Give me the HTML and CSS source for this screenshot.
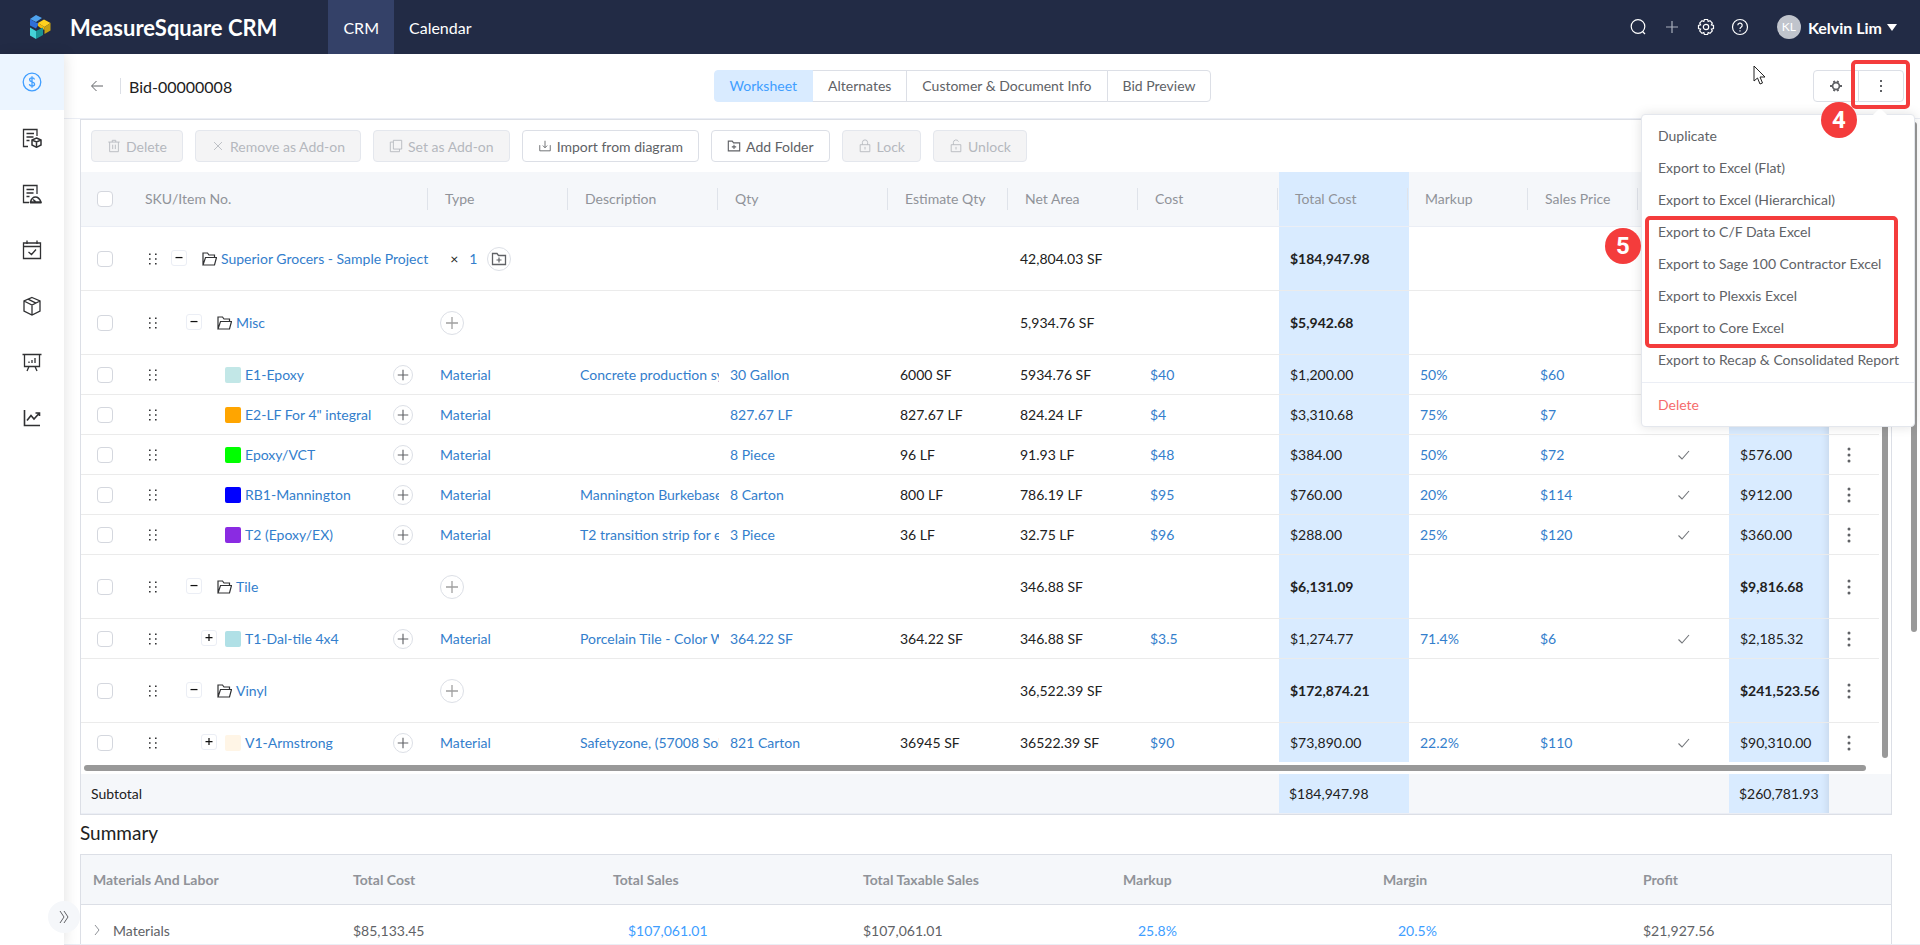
FILE: index.html
```html
<!DOCTYPE html>
<html lang="en">
<head>
    <meta charset="UTF-8">
    <meta name="viewport" content="width=device-width, initial-scale=1.0">
    <title>MeasureSquare CRM - Bid-00000008</title>
    <link rel="stylesheet" href="styles.css">
</head>
<body>
    <!-- shared icons -->
    <svg class="sprite" aria-hidden="true">
        <symbol id="i-drag" viewBox="0 0 10 14"><path d="M1 1.500h1.600v1.600H1zM7 1.500h1.600v1.600H7zM1 6.200h1.600v1.600H1zM7 6.200h1.600v1.600H7zM1 11h1.600v1.600H1zM7 11h1.600v1.600H7z" fill="currentColor"/></symbol>
        <symbol id="i-folder" viewBox="0 0 15 14"><path d="M1 13V1h4.500l1.500 2h5.500v2.500M1 13l2.500-7.500h11L12.500 13z" fill="none" stroke="currentColor" stroke-width="1.200"/></symbol>
        <symbol id="i-plus" viewBox="0 0 16 16"><path d="M8 2v12M2 8h12" fill="none" stroke="currentColor" stroke-width="1.300"/></symbol>
        <symbol id="i-folder-add" viewBox="0 0 16 16"><path d="M1.500 2.500h4.500l1.500 2h7v9h-13z" fill="none" stroke="currentColor" stroke-width="1.300"/><path d="M8 6.500v5M5.500 9h5" fill="none" stroke="currentColor" stroke-width="1.200"/></symbol>
        <symbol id="i-check" viewBox="0 0 14 14"><path d="M1.500 7.500l3.500 3.500 7-8" fill="none" stroke="currentColor" stroke-width="1.100"/></symbol>
        <symbol id="i-more" viewBox="0 0 4 16"><circle cx="2" cy="2" r="1.500"/><circle cx="2" cy="8" r="1.500"/><circle cx="2" cy="14" r="1.500"/></symbol>
        <symbol id="i-lock" viewBox="0 0 16 16"><path d="M2.500 6.500h11v8h-11zM5 6.500V4a3 3 0 0 1 6 0v2.500M8 9v3" fill="none" stroke="currentColor"/></symbol>
        <symbol id="i-unlock" viewBox="0 0 16 16"><path d="M2.500 6.500h11v8h-11zM5 6.500V4a3 3 0 0 1 5.800-1M8 9v3" fill="none" stroke="currentColor"/></symbol>
    </svg>

    <header class="topbar">
        <svg class="logo" viewBox="0 0 22 24">
            <path d="M1 4l6-4 6 3-6 4z" fill="#4fa3ee"/>
            <path d="M1 4l6 3.500 3 1-3 5-6-3z" fill="#2f6fd8"/>
            <path d="M9 8l6-3.500 6.500 3.500-6 4z" fill="#ffd21f"/>
            <path d="M21.500 8v7.500L15.500 19v-7z" fill="#c9a312"/>
            <path d="M9 8l6.500 4v3L11 12.500 9 11z" fill="#f5bf0c"/>
            <path d="M1 12.500l6 3.500v8l-6-3.500z" fill="#45d3d8"/>
            <path d="M7 16l7-3.500V20l-7 4z" fill="#1a9496"/>
        </svg>
        <h1 class="brand">MeasureSquare CRM</h1>
        <nav class="topnav">
            <a class="active" href="#">CRM</a>
            <a href="#">Calendar</a>
        </nav>
        <div class="tools">
            <button class="tool" aria-label="Search"><svg viewBox="0 0 18 18"><circle cx="9" cy="8.500" r="6.800"/><path d="M13.500 13.500l2.500 2.500"/></svg></button>
            <button class="tool dim" aria-label="Add"><svg viewBox="0 0 18 18"><path d="M9 3v12M3 9h12"/></svg></button>
            <button class="tool" aria-label="Settings"><svg viewBox="0 0 18 18"><path d="M7.400 1.500h3.200l.6 2 1.800-.8 2.300 2.300-.9 1.800 2.100.6v3.200l-2.100.6.9 1.800-2.300 2.300-1.800-.8-.6 2H7.400l-.6-2-1.800.8L2.700 13l.9-1.800-2.100-.6V7.400l2.100-.6L2.700 5 5 2.700l1.800.8z"/><circle cx="9" cy="9" r="2.700"/></svg></button>
            <button class="tool" aria-label="Help"><svg viewBox="0 0 18 18"><circle cx="9" cy="9" r="7.500"/><path d="M6.800 7.300a2.200 2.200 0 1 1 3.300 1.900c-.8.500-1.100.8-1.100 1.800M9 12.300v1.300"/></svg></button>
        </div>
        <button class="user"><span class="avatar">KL</span>Kelvin Lim<span class="caret"></span></button>
    </header>

    <div class="shell">
        <nav class="sidebar">
            <a class="active" href="#" aria-label="Bids"><svg viewBox="0 0 20 20"><circle cx="10" cy="10" r="8.800"/><path d="M12.500 7.500c-.2-1.200-1.200-1.700-2.500-1.700s-2.400.7-2.400 2c0 2.800 5 1.500 5 4.300 0 1.300-1.100 2-2.500 2s-2.500-.6-2.700-1.900M10 4.300v11.400"/></svg></a>
            <a href="#" aria-label="Orders"><svg viewBox="0 0 20 20"><path d="M6 18.500H1.500v-17H15V8M4.500 5.500H12M4.500 9h7M4.500 12.500h3"/><path d="M14.500 10l4.500 2v5l-4.500 2.300L10 17v-5zM10 12l4.500 2 4.500-2M14.500 14v5" stroke-width="1.500"/></svg></a>
            <a href="#" aria-label="Invoices"><svg viewBox="0 0 20 20"><path d="M7 18.500H1.500v-17H15V10M4.500 5.500H12M4.500 9h7M4.500 12.500h3"/><path d="M8.500 18c1-3.500 3-5 5-5s4 1.500 5.500 5zM11 15.500l2.500 2M8 18.800h11.500" stroke-width="1.500"/></svg></a>
            <a href="#" aria-label="Schedule"><svg viewBox="0 0 20 20"><path d="M1.500 3h17v15.500h-17zM1.500 6.500h17M5 .5V4M15 .5V4M6.500 12l3 2.500 4.500-5"/></svg></a>
            <a href="#" aria-label="Products"><svg viewBox="0 0 20 20"><path d="M10 1.500l8 3.500v10l-8 4-8-4V5zM2 5l8 4 8-4M10 9v10M6 3.200l8 4"/></svg></a>
            <a href="#" aria-label="Presentations"><svg viewBox="0 0 20 20"><path d="M.5 2.500h19M2.500 2.500v12h15v-12M7 14.500L5 19M13 14.500l2 4.500M7 11V9.500M10 11V8M13 11V6"/></svg></a>
            <a href="#" aria-label="Reports"><svg viewBox="0 0 20 20"><path d="M2.500 2v15.500H18M5 12.500l4-5 3 3.500L17 5.500M13.500 5H17.500v3" stroke-width="1.600"/></svg></a>
        </nav>
        <button class="expand" aria-label="Expand menu"><svg viewBox="0 0 12 12"><path d="M2 0l4 6-4 6M6 0l4 6-4 6"/></svg></button>

        <main class="main">
            <div class="pagehead">
                <div class="crumb">
                    <a class="back" href="#" aria-label="Back"><svg viewBox="0 0 14 12"><path d="M13 6H2M6.500 1l-5 5 5 5"/></svg></a>
                    <h2>Bid-00000008</h2>
                </div>
                <div class="tabs">
                    <button class="active">Worksheet</button>
                    <button>Alternates</button>
                    <button>Customer &amp; Document Info</button>
                    <button>Bid Preview</button>
                </div>
                <div class="actions">
                    <button aria-label="Columns"><svg viewBox="0 0 14 14"><circle cx="7" cy="7" r="4" stroke-width="2"/><path d="M4.500 1l1 2.500M9.500 1l-1 2.500M4.500 13l1-2.500M9.500 13l-1-2.500M0 7h3M11 7h3" stroke-width="2.400"/></svg></button>
                    <div class="dropdown">
                        <button aria-label="More"><svg class="dots" viewBox="0 0 4 14"><path d="M1 1h2v2H1zM1 6h2v2H1zM1 11h2v2H1z" fill="currentColor" stroke="none"/></svg></button>
                        <span class="frame frame-button"></span>
                        <div class="menu">
                            <button>Duplicate</button>
                            <button>Export to Excel (Flat)</button>
                            <button>Export to Excel (Hierarchical)</button>
                            <div class="group">
                                <button>Export to C/F Data Excel</button>
                                <button>Export to Sage 100 Contractor Excel</button>
                                <button>Export to Plexxis Excel</button>
                                <button>Export to Core Excel</button>
                                <span class="frame frame-group"></span>
                                <span class="step step-5">5</span>
                            </div>
                            <button>Export to Recap &amp; Consolidated Report</button>
                            <hr>
                            <button class="danger">Delete</button>
                            <span class="step step-4">4</span>
                        </div>
                    </div>
                </div>
            </div>

            <div class="content">
                <section class="worksheet">
                    <div class="toolbar">
                        <button disabled><svg viewBox="0 0 16 16"><path d="M1.500 3.500h13M3 3.500v11h10v-11M6 3.500v-2h4v2M6.500 6.500v5M9.500 6.500v5"/></svg>Delete</button>
                        <button disabled><svg viewBox="0 0 16 16"><path d="M3.500 3.500l9 9M12.500 3.500l-9 9"/></svg>Remove as Add-on</button>
                        <button disabled><svg viewBox="0 0 16 16"><path d="M5 1.500h9.500v10H5zM5 3.500H1.500v11H12v-3"/></svg>Set as Add-on</button>
                        <button><svg viewBox="0 0 16 16"><path d="M2 7v6.500h12V7M8 2v8M5.500 7.500L8 10l2.500-2.500"/></svg>Import from diagram</button>
                        <button><svg><use href="#i-folder-add"/></svg>Add Folder</button>
                        <button disabled><svg><use href="#i-lock"/></svg>Lock</button>
                        <button disabled><svg><use href="#i-unlock"/></svg>Unlock</button>
                    </div>

                    <div class="grid-wrap">
                        <table class="grid">
                            <colgroup><col class="w48"><col><col class="w140"><col class="w150"><col class="w170"><col class="w120"><col class="w130"><col class="w140"><col class="w130"><col class="w120"><col class="w110"><col class="w90"><col class="w100"><col class="w50"></colgroup>
                            <thead>
                                <tr>
                                    <th class="nosep"><input type="checkbox" aria-label="Select all"></th>
                                    <th>SKU/Item No.</th>
                                    <th>Type</th>
                                    <th>Description</th>
                                    <th>Qty</th>
                                    <th>Estimate Qty</th>
                                    <th>Net Area</th>
                                    <th>Cost</th>
                                    <th class="hl">Total Cost</th>
                                    <th>Markup</th>
                                    <th>Sales Price</th>
                                    <th></th>
                                    <th class="hl"></th>
                                    <th class="nosep"></th>
                                </tr>
                            </thead>
                            <tbody>
                                <tr class="folder">
                                    <td><input type="checkbox" aria-label="Select row"></td>
                                    <td colspan="2"><div class="item"><svg class="drag"><use href="#i-drag"/></svg><button class="toggle" aria-label="Collapse"><svg viewBox="0 0 16 16"><path d="M4 7.500h8"/></svg></button><svg class="fold"><use href="#i-folder"/></svg><a href="#">Superior Grocers - Sample Project</a><span class="times">×</span><a href="#">1</a><button class="round big" aria-label="Add folder"><svg><use href="#i-folder-add"/></svg></button></div></td>
                                    <td></td><td></td><td></td>
                                    <td>42,804.03 SF</td>
                                    <td></td>
                                    <td class="hl">$184,947.98</td>
                                    <td></td><td></td><td></td>
                                    <td class="hl edge"></td>
                                    <td></td>
                                </tr>
                                <tr class="folder">
                                    <td><input type="checkbox" aria-label="Select row"></td>
                                    <td><div class="item level-1"><svg class="drag"><use href="#i-drag"/></svg><button class="toggle" aria-label="Collapse"><svg viewBox="0 0 16 16"><path d="M4 7.500h8"/></svg></button><svg class="fold"><use href="#i-folder"/></svg><a href="#">Misc</a></div></td>
                                    <td><button class="round big" aria-label="Add item"><svg><use href="#i-plus"/></svg></button></td>
                                    <td></td><td></td><td></td>
                                    <td>5,934.76 SF</td>
                                    <td></td>
                                    <td class="hl">$5,942.68</td>
                                    <td></td><td></td><td></td>
                                    <td class="hl edge"></td>
                                    <td></td>
                                </tr>
                                <tr>
                                    <td><input type="checkbox" aria-label="Select row"></td>
                                    <td><div class="item level-2"><svg class="drag"><use href="#i-drag"/></svg><span class="toggle none"></span><i class="swatch aqua"></i><a href="#">E1-Epoxy</a><button class="round" aria-label="Add"><svg><use href="#i-plus"/></svg></button></div></td>
                                    <td><a href="#">Material</a></td>
                                    <td><a href="#">Concrete production system</a></td>
                                    <td><a href="#">30 Gallon</a></td>
                                    <td>6000 SF</td>
                                    <td>5934.76 SF</td>
                                    <td><a href="#">$40</a></td>
                                    <td class="hl">$1,200.00</td>
                                    <td><a href="#">50%</a></td>
                                    <td><a href="#">$60</a></td>
                                    <td></td>
                                    <td class="hl edge"></td>
                                    <td></td>
                                </tr>
                                <tr>
                                    <td><input type="checkbox" aria-label="Select row"></td>
                                    <td><div class="item level-2"><svg class="drag"><use href="#i-drag"/></svg><span class="toggle none"></span><i class="swatch orange"></i><a href="#">E2-LF For 4" integral</a><button class="round" aria-label="Add"><svg><use href="#i-plus"/></svg></button></div></td>
                                    <td><a href="#">Material</a></td>
                                    <td></td>
                                    <td><a href="#">827.67 LF</a></td>
                                    <td>827.67 LF</td>
                                    <td>824.24 LF</td>
                                    <td><a href="#">$4</a></td>
                                    <td class="hl">$3,310.68</td>
                                    <td><a href="#">75%</a></td>
                                    <td><a href="#">$7</a></td>
                                    <td></td>
                                    <td class="hl edge"></td>
                                    <td></td>
                                </tr>
                                <tr>
                                    <td><input type="checkbox" aria-label="Select row"></td>
                                    <td><div class="item level-2"><svg class="drag"><use href="#i-drag"/></svg><span class="toggle none"></span><i class="swatch lime"></i><a href="#">Epoxy/VCT</a><button class="round" aria-label="Add"><svg><use href="#i-plus"/></svg></button></div></td>
                                    <td><a href="#">Material</a></td>
                                    <td></td>
                                    <td><a href="#">8 Piece</a></td>
                                    <td>96 LF</td>
                                    <td>91.93 LF</td>
                                    <td><a href="#">$48</a></td>
                                    <td class="hl">$384.00</td>
                                    <td><a href="#">50%</a></td>
                                    <td><a href="#">$72</a></td>
                                    <td class="tick"><svg><use href="#i-check"/></svg></td>
                                    <td class="hl edge">$576.00</td>
                                    <td><svg class="more"><use href="#i-more"/></svg></td>
                                </tr>
                                <tr>
                                    <td><input type="checkbox" aria-label="Select row"></td>
                                    <td><div class="item level-2"><svg class="drag"><use href="#i-drag"/></svg><span class="toggle none"></span><i class="swatch blue"></i><a href="#">RB1-Mannington</a><button class="round" aria-label="Add"><svg><use href="#i-plus"/></svg></button></div></td>
                                    <td><a href="#">Material</a></td>
                                    <td><a href="#">Mannington Burkebase</a></td>
                                    <td><a href="#">8 Carton</a></td>
                                    <td>800 LF</td>
                                    <td>786.19 LF</td>
                                    <td><a href="#">$95</a></td>
                                    <td class="hl">$760.00</td>
                                    <td><a href="#">20%</a></td>
                                    <td><a href="#">$114</a></td>
                                    <td class="tick"><svg><use href="#i-check"/></svg></td>
                                    <td class="hl edge">$912.00</td>
                                    <td><svg class="more"><use href="#i-more"/></svg></td>
                                </tr>
                                <tr>
                                    <td><input type="checkbox" aria-label="Select row"></td>
                                    <td><div class="item level-2"><svg class="drag"><use href="#i-drag"/></svg><span class="toggle none"></span><i class="swatch violet"></i><a href="#">T2 (Epoxy/EX)</a><button class="round" aria-label="Add"><svg><use href="#i-plus"/></svg></button></div></td>
                                    <td><a href="#">Material</a></td>
                                    <td><a href="#">T2 transition strip for epoxy</a></td>
                                    <td><a href="#">3 Piece</a></td>
                                    <td>36 LF</td>
                                    <td>32.75 LF</td>
                                    <td><a href="#">$96</a></td>
                                    <td class="hl">$288.00</td>
                                    <td><a href="#">25%</a></td>
                                    <td><a href="#">$120</a></td>
                                    <td class="tick"><svg><use href="#i-check"/></svg></td>
                                    <td class="hl edge">$360.00</td>
                                    <td><svg class="more"><use href="#i-more"/></svg></td>
                                </tr>
                                <tr class="folder">
                                    <td><input type="checkbox" aria-label="Select row"></td>
                                    <td><div class="item level-1"><svg class="drag"><use href="#i-drag"/></svg><button class="toggle" aria-label="Collapse"><svg viewBox="0 0 16 16"><path d="M4 7.500h8"/></svg></button><svg class="fold"><use href="#i-folder"/></svg><a href="#">Tile</a></div></td>
                                    <td><button class="round big" aria-label="Add item"><svg><use href="#i-plus"/></svg></button></td>
                                    <td></td><td></td><td></td>
                                    <td>346.88 SF</td>
                                    <td></td>
                                    <td class="hl">$6,131.09</td>
                                    <td></td><td></td><td></td>
                                    <td class="hl edge">$9,816.68</td>
                                    <td><svg class="more"><use href="#i-more"/></svg></td>
                                </tr>
                                <tr>
                                    <td><input type="checkbox" aria-label="Select row"></td>
                                    <td><div class="item level-2"><svg class="drag"><use href="#i-drag"/></svg><button class="toggle" aria-label="Expand"><svg viewBox="0 0 16 16"><path d="M4 7.500h8M8 3.500v8"/></svg></button><i class="swatch powder"></i><a href="#">T1-Dal-tile 4x4</a><button class="round" aria-label="Add"><svg><use href="#i-plus"/></svg></button></div></td>
                                    <td><a href="#">Material</a></td>
                                    <td><a href="#">Porcelain Tile - Color White</a></td>
                                    <td><a href="#">364.22 SF</a></td>
                                    <td>364.22 SF</td>
                                    <td>346.88 SF</td>
                                    <td><a href="#">$3.5</a></td>
                                    <td class="hl">$1,274.77</td>
                                    <td><a href="#">71.4%</a></td>
                                    <td><a href="#">$6</a></td>
                                    <td class="tick"><svg><use href="#i-check"/></svg></td>
                                    <td class="hl edge">$2,185.32</td>
                                    <td><svg class="more"><use href="#i-more"/></svg></td>
                                </tr>
                                <tr class="folder">
                                    <td><input type="checkbox" aria-label="Select row"></td>
                                    <td><div class="item level-1"><svg class="drag"><use href="#i-drag"/></svg><button class="toggle" aria-label="Collapse"><svg viewBox="0 0 16 16"><path d="M4 7.500h8"/></svg></button><svg class="fold"><use href="#i-folder"/></svg><a href="#">Vinyl</a></div></td>
                                    <td><button class="round big" aria-label="Add item"><svg><use href="#i-plus"/></svg></button></td>
                                    <td></td><td></td><td></td>
                                    <td>36,522.39 SF</td>
                                    <td></td>
                                    <td class="hl">$172,874.21</td>
                                    <td></td><td></td><td></td>
                                    <td class="hl edge">$241,523.56</td>
                                    <td><svg class="more"><use href="#i-more"/></svg></td>
                                </tr>
                                <tr>
                                    <td><input type="checkbox" aria-label="Select row"></td>
                                    <td><div class="item level-2"><svg class="drag"><use href="#i-drag"/></svg><button class="toggle" aria-label="Expand"><svg viewBox="0 0 16 16"><path d="M4 7.500h8M8 3.500v8"/></svg></button><i class="swatch cream"></i><a href="#">V1-Armstrong</a><button class="round" aria-label="Add"><svg><use href="#i-plus"/></svg></button></div></td>
                                    <td><a href="#">Material</a></td>
                                    <td><a href="#">Safetyzone, (57008 Solid)</a></td>
                                    <td><a href="#">821 Carton</a></td>
                                    <td>36945 SF</td>
                                    <td>36522.39 SF</td>
                                    <td><a href="#">$90</a></td>
                                    <td class="hl">$73,890.00</td>
                                    <td><a href="#">22.2%</a></td>
                                    <td><a href="#">$110</a></td>
                                    <td class="tick"><svg><use href="#i-check"/></svg></td>
                                    <td class="hl edge">$90,310.00</td>
                                    <td><svg class="more"><use href="#i-more"/></svg></td>
                                </tr>
                            </tbody>
                        </table>
                        <div class="vbar"></div>
                    </div>
                    <div class="hbar"></div>
                    <div class="subtotal">
                        <table class="grid">
                            <colgroup><col class="w48"><col><col class="w140"><col class="w150"><col class="w170"><col class="w120"><col class="w130"><col class="w140"><col class="w130"><col class="w120"><col class="w110"><col class="w90"><col class="w100"><col class="w50"></colgroup>
                            <tbody>
                                <tr>
                                    <td class="label" colspan="2">Subtotal</td>
                                    <td></td><td></td><td></td><td></td><td></td><td></td>
                                    <td class="hl">$184,947.98</td>
                                    <td></td><td></td><td></td>
                                    <td class="hl edge">$260,781.93</td>
                                    <td></td>
                                </tr>
                            </tbody>
                        </table>
                    </div>
                </section>

                <h3>Summary</h3>
                <table class="summary">
                    <colgroup><col><col><col class="w250"><col><col><col><col></colgroup>
                    <thead>
                        <tr>
                            <th>Materials And Labor</th>
                            <th>Total Cost</th>
                            <th>Total Sales</th>
                            <th>Total Taxable Sales</th>
                            <th>Markup</th>
                            <th>Margin</th>
                            <th>Profit</th>
                        </tr>
                    </thead>
                    <tbody>
                        <tr>
                            <td><svg class="chev" viewBox="0 0 8 12"><path d="M2 1l4 5-4 5"/></svg>Materials</td>
                            <td>$85,133.45</td>
                            <td><a href="#">$107,061.01</a></td>
                            <td>$107,061.01</td>
                            <td><a href="#">25.8%</a></td>
                            <td><a href="#">20.5%</a></td>
                            <td>$21,927.56</td>
                        </tr>
                    </tbody>
                </table>
            </div>
            <div class="page-bar"></div>
        </main>
    </div>

    <svg class="pointer" viewBox="0 0 13 20"><path d="M1 1v15l3.500-3 2.500 6 2.500-1-2.500-6h5z" fill="#fff" stroke="#222"/></svg>
</body>
</html>
```
FILE: styles.css
```css
* {
    box-sizing: border-box;
}
body {
    margin: 0;
    height: 100vh;
    display: flex;
    flex-direction: column;
    overflow: hidden;
    font-family: Lato, "Liberation Sans", sans-serif;
    font-size: 14px;
    color: #212121;
    background: #fff;
}
h1, h2, h3 {
    margin: 0;
    font-weight: 400;
}
a {
    color: #337ecc;
    text-decoration: none;
}
button {
    font: inherit;
    color: #606266;
    background: #fff;
    border: 1px solid #dcdfe6;
    padding: 0;
    cursor: pointer;
}
svg {
    flex: none;
    fill: none;
    stroke: currentColor;
}
.sprite {
    display: none;
}
symbol path[fill="currentColor"], symbol circle {
    stroke: none;
    fill: currentColor;
}

/* top bar */
.topbar {
    height: 54px;
    flex: none;
    display: flex;
    align-items: center;
    padding-right: 23px;
    background: #222b45;
    color: #fff;
}
.logo {
    width: 22px;
    height: 24px;
    margin-left: 29px;
    stroke: none;
}
.brand {
    margin: 0 51px 0 19px;
    font-size: 22px;
    font-weight: 700;
}
.topnav {
    display: flex;
    align-self: stretch;
    flex: 1;
}
.topnav a {
    display: flex;
    align-items: center;
    padding: 0 15px;
    font-size: 16px;
    color: #fff;
}
.topnav .active {
    background: #344168;
}
.tools {
    display: flex;
    gap: 16px;
    margin-right: 28px;
}
.tool {
    width: 18px;
    height: 18px;
    border: 0;
    background: none;
    color: #fff;
}
.tool svg {
    display: block;
    width: 18px;
    height: 18px;
    stroke-width: 1.2;
}
.dim {
    color: #aab0bd;
}
.user {
    display: flex;
    align-items: center;
    border: 0;
    background: none;
    color: #fff;
    font-size: 16px;
    font-weight: 700;
}
.avatar {
    width: 24px;
    height: 24px;
    margin-right: 7px;
    border-radius: 50%;
    background: #c0c4cc;
    font-size: 12px;
    font-weight: 400;
    line-height: 24px;
}
.caret {
    margin-left: 5px;
    border: 5px solid transparent;
    border-top: 7px solid #fff;
    border-bottom: 0;
}

/* side bar */
.shell {
    position: relative;
    flex: 1;
    display: flex;
    min-height: 0;
}
.sidebar {
    width: 64px;
    flex: none;
    z-index: 1;
    background: #fff;
    box-shadow: 2px 0 12px rgba(0, 0, 0, 0.1);
}
.sidebar a {
    height: 56px;
    display: flex;
    align-items: center;
    justify-content: center;
    color: #303133;
}
.sidebar svg {
    width: 20px;
    height: 20px;
    stroke-width: 1.3;
}
.sidebar .active {
    background: #ecf5ff;
    color: #409eff;
}
.expand {
    position: absolute;
    z-index: 2;
    left: 48px;
    bottom: 12px;
    width: 32px;
    height: 32px;
    border: 0;
    border-radius: 50%;
    background: #f5f7fa;
}
.expand svg {
    display: block;
    width: 12px;
    height: 12px;
    margin: auto;
}

/* page head */
.main {
    position: relative;
    flex: 1;
    min-width: 0;
    display: flex;
    flex-direction: column;
    margin-bottom: 1px;
    box-shadow: 0 1px #ebeef5;
}
.pagehead {
    height: 65px;
    flex: none;
    display: grid;
    grid-template-columns: 1fr auto 1fr;
    align-items: center;
    padding: 0 16px 0 24px;
    border-bottom: 1px solid #ebeef5;
}
.crumb {
    display: flex;
    align-items: center;
}
.back {
    display: flex;
    width: 33px;
    height: 16px;
    align-items: center;
    border-right: 1px solid #dcdfe6;
    color: #606266;
}
.back svg {
    width: 14px;
    height: 12px;
    margin-left: 2px;
}
.crumb h2 {
    margin-left: 8px;
    font-size: 16px;
}
.tabs {
    display: flex;
    margin-right: 66px;
}
.tabs button {
    height: 32px;
    padding: 0 15px 2px;
    margin-left: -1px;
}
.tabs button:first-child {
    border-radius: 4px 0 0 4px;
}
.tabs button:last-child {
    border-radius: 0 4px 4px 0;
}
.tabs .active {
    position: relative;
    border-color: #d9ebff;
    background: #d9ebff;
    color: #409eff;
}
.actions {
    display: flex;
    justify-content: flex-end;
}
.actions > button, .dropdown > button {
    display: flex;
    align-items: center;
    justify-content: center;
    width: 46px;
    height: 32px;
}
.actions > button {
    border-radius: 4px 0 0 4px;
    margin-right: -1px;
}
.actions svg {
    width: 12px;
    height: 12px;
}
.actions .dots {
    width: 4px;
    height: 14px;
}
.dropdown {
    position: relative;
}
.dropdown > button {
    border-radius: 0 4px 4px 0;
}

/* dropdown menu */
.menu {
    position: absolute;
    z-index: 5;
    top: 44px;
    right: -11px;
    width: 274px;
    padding: 5px 0;
    border: 1px solid #e4e7ed;
    border-radius: 4px;
    background: #fff;
    box-shadow: 0 0 12px rgba(0, 0, 0, 0.12);
}
.menu::before {
    content: "";
    position: absolute;
    top: -5px;
    right: 29px;
    width: 10px;
    height: 10px;
    background: #fff;
    transform: rotate(45deg);
}
.menu button {
    display: block;
    width: 100%;
    height: 32px;
    padding: 0 16px 2px;
    border: 0;
    background: none;
    text-align: left;
    white-space: nowrap;
}
.menu hr {
    margin: 6px 0;
    border: 0;
    border-top: 1px solid #ebeef5;
}
.menu .danger {
    color: #f56c6c;
}
.group {
    position: relative;
}

/* numbered callouts */
.frame {
    position: absolute;
    border: 4px solid #f43c3c;
    border-radius: 5px;
}
.frame-button {
    z-index: 6;
    inset: -10px -6px -7px -7px;
}
.frame-group {
    inset: 0 16px -4px 3px;
}
.step {
    position: absolute;
    width: 36px;
    height: 36px;
    border-radius: 50%;
    background: #f43c3c;
    color: #fff;
    font: 700 24px/36px Roboto, sans-serif;
    text-align: center;
}
.step-4 {
    top: -13px;
    left: 179px;
}
.step-5 {
    top: 12px;
    left: -37px;
}

/* worksheet */
.content {
    flex: 1;
    min-height: 0;
    overflow: hidden;
    padding: 0 28px 0 16px;
}
.worksheet {
    border: 1px solid #dcdfe6;
}
.toolbar {
    display: flex;
    gap: 12px;
    padding: 10px;
}
.toolbar button {
    display: flex;
    align-items: center;
    gap: 5px;
    height: 32px;
    padding: 0 15px;
    border-radius: 4px;
}
.toolbar svg {
    width: 14px;
    height: 14px;
}
.toolbar button:disabled {
    border-color: #e4e7ed;
    background: #f4f4f5;
    color: #b5b8be;
}
.grid-wrap {
    position: relative;
    background: linear-gradient(#f5f7fa 55px, #fff 55px);
}
.grid {
    width: calc(100% - 12px);
    table-layout: fixed;
    border-collapse: separate;
    border-spacing: 0;
}
.w48 { width: 48px; }
.w50 { width: 50px; }
.w90 { width: 90px; }
.w100 { width: 100px; }
.w110 { width: 110px; }
.w120 { width: 120px; }
.w130 { width: 130px; }
.w140 { width: 140px; }
.w150 { width: 150px; }
.w170 { width: 170px; }
.w250 { width: 250px; }
.grid th {
    position: relative;
    height: 55px;
    padding: 0 16px 2px;
    border-bottom: 1px solid #ebeef5;
    background: #f5f7fa;
    color: #909399;
    font-weight: 400;
    text-align: left;
}
.grid th::after {
    content: "";
    position: absolute;
    top: 16px;
    right: 1px;
    width: 1px;
    height: 22px;
    background: #dfe3ea;
}
.grid .nosep::after {
    display: none;
}
.grid td {
    height: 40px;
    padding: 0 0 0 11px;
    border-bottom: 1px solid #ebebeb;
    white-space: nowrap;
    overflow: hidden;
}
.grid .folder td {
    height: 64px;
}
.grid tbody tr:last-child td {
    height: 39px;
    border-bottom: 0;
}
.grid th:first-child, .grid td:first-child:not(.label) {
    padding: 0 0 0 16px;
}
.grid .hl {
    background: #d9ebff;
}
.grid .folder .hl {
    font-weight: 700;
}
.grid .edge {
    box-shadow: inset -10px 0 10px -10px rgba(0, 0, 0, 0.12);
}
.grid input {
    appearance: none;
    display: block;
    width: 16px;
    height: 16px;
    margin: 0;
    border: 1px solid #d4d7de;
    border-radius: 4px;
    background: #fff;
}
.item {
    display: flex;
    align-items: center;
}
.drag {
    width: 10px;
    height: 14px;
    margin: 0 13px 0 8px;
    color: #303133;
}
.level-1 .drag {
    margin-right: 28px;
}
.level-2 .drag {
    margin-right: 43px;
}
.toggle {
    width: 16px;
    height: 16px;
    margin: 0 15px 2px 0;
    border: 1px solid #ebeef5;
    border-radius: 3px;
    color: #111;
}
.toggle svg {
    display: block;
    width: 14px;
    height: 14px;
    stroke-width: 1.4;
}
.level-2 .toggle {
    margin-right: 8px;
}
.none {
    border-color: transparent;
}
.fold {
    width: 15px;
    height: 14px;
    margin-right: 4px;
    color: #303133;
}
.times {
    margin: 0 11px 0 22px;
}
.swatch {
    width: 16px;
    height: 16px;
    margin-right: 4px;
    border-radius: 2px;
}
.aqua { background: #c2e7e7; }
.orange { background: #ffa500; }
.lime { background: #00ff00; }
.blue { background: #0000ff; }
.violet { background: #8a2be2; }
.powder { background: #b0e0e6; }
.cream { background: #fff5e6; }
.round {
    display: flex;
    align-items: center;
    justify-content: center;
    width: 20px;
    height: 20px;
    margin: 0 16px 0 auto;
    border-radius: 50%;
}
.round svg {
    width: 14px;
    height: 14px;
}
.big {
    width: 24px;
    height: 24px;
    margin: 0;
    color: #a0a0a0;
}
.big svg {
    width: 16px;
    height: 16px;
}
.item .big {
    margin-left: 10px;
    color: #606266;
}
.tick svg {
    display: block;
    width: 14px;
    height: 14px;
    margin-left: 27px;
    color: #73767a;
}
.more {
    display: block;
    width: 4px;
    height: 16px;
    margin-left: 7px;
    color: #606266;
}
.vbar {
    position: absolute;
    top: 60px;
    right: 3px;
    bottom: 4px;
    width: 6px;
    border-radius: 3px;
    background: #999;
}
.hbar {
    height: 6px;
    margin: 3px 25px 3px 3px;
    border-radius: 3px;
    background: #999;
}
.subtotal {
    background: #f5f7fa;
    border-bottom: 1px solid #ebeef5;
}
.subtotal .grid td {
    padding: 0 0 0 10px;
}

/* summary */
h3 {
    height: 39px;
    font-size: 19px;
    line-height: 36px;
}
.summary {
    width: 100%;
    table-layout: fixed;
    border: 1px solid #dcdfe6;
    border-spacing: 0;
}
.summary th, .summary td {
    height: 50px;
    padding: 0 12px;
    text-align: left;
    color: #606266;
}
.summary th {
    border-bottom: 1px solid #dcdfe6;
    background: #f5f7fa;
    color: #909399;
    font-weight: 700;
}
.summary a {
    padding-left: 15px;
    color: #409eff;
}
.chev {
    width: 8px;
    height: 12px;
    margin-right: 12px;
    color: #909399;
}
.page-bar {
    position: absolute;
    top: 68px;
    right: 3px;
    width: 6px;
    height: 510px;
    border-radius: 3px;
    background: #999;
}
.pointer {
    position: absolute;
    top: 65px;
    left: 1753px;
    width: 13px;
    height: 20px;
}
```
